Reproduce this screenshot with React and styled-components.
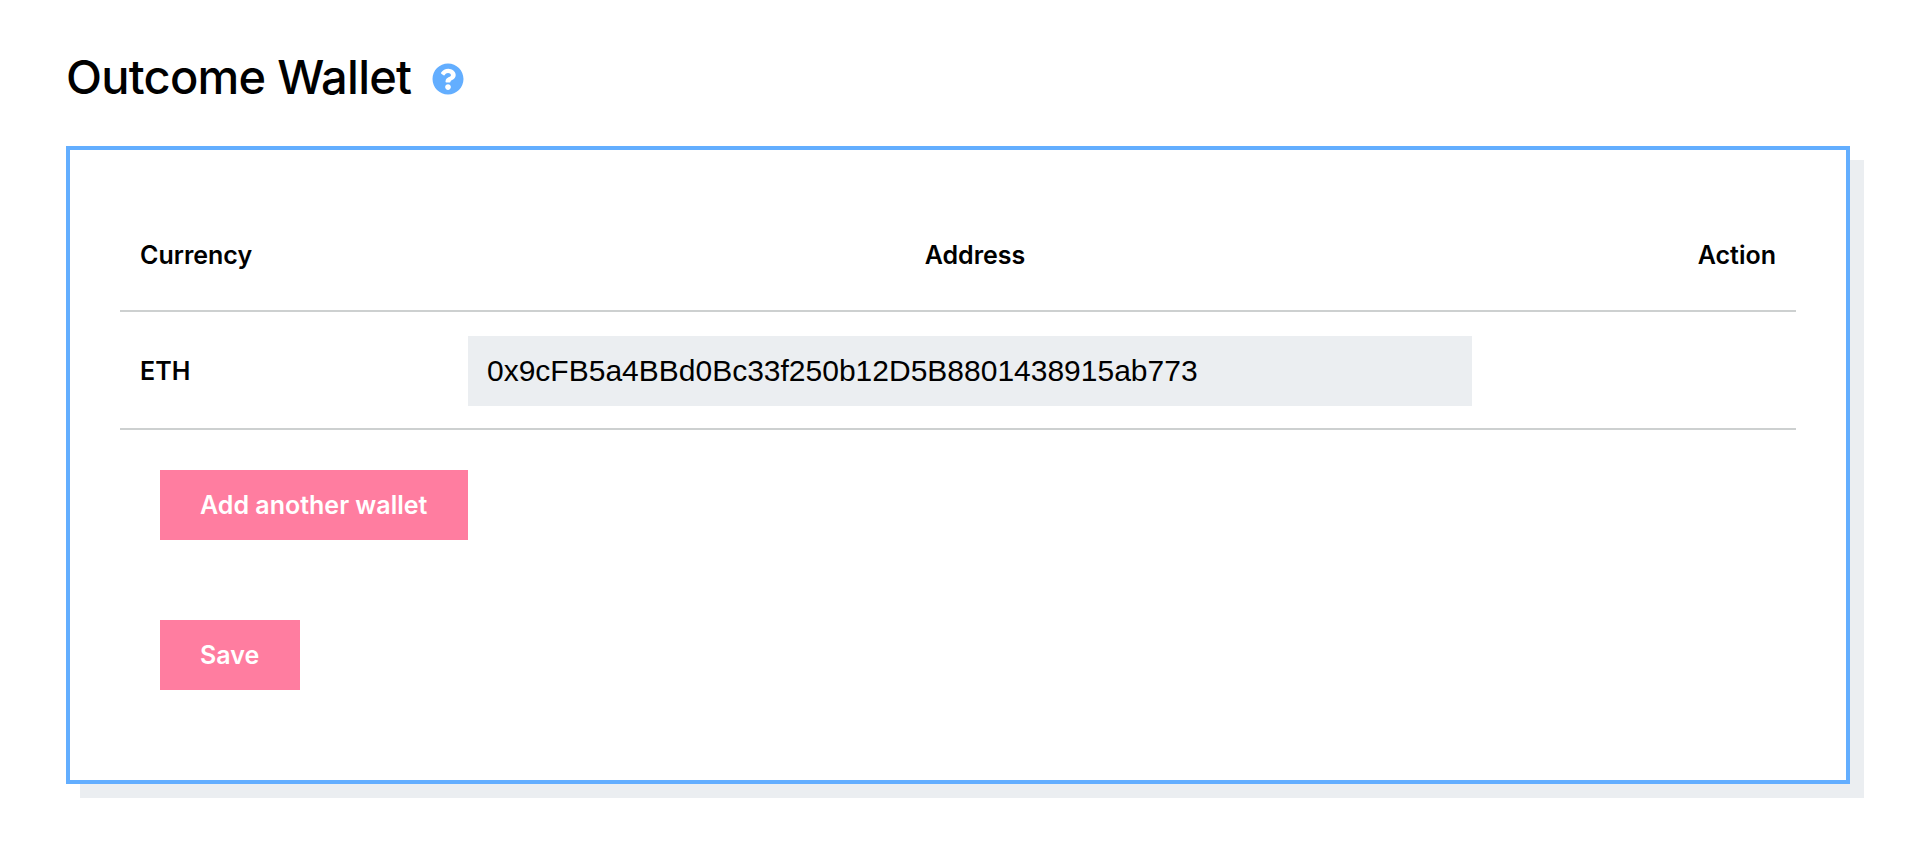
import React from 'react'
import styled, { createGlobalStyle } from 'styled-components'
import { FaQuestionCircle } from 'react-icons/fa'

const GlobalStyle = createGlobalStyle`
  html, body {
    margin: 0;
    padding: 0;
    background: #fff;
    font-family: Inter, "Liberation Sans", sans-serif;
    color: #000;
  }
`

const Page = styled.main`
  padding: 46px 58px 50px 66px;
`

const TitleRow = styled.div`
  display: flex;
  align-items: center;
  gap: 21px;
  height: 62px;
  margin-bottom: 38px;
`

const Title = styled.h1`
  margin: 0;
  font-size: 47px;
  line-height: 62px;
  font-weight: 500;
  letter-spacing: -0.75px;
`

const HelpIcon = styled(FaQuestionCircle)`
  width: 32px;
  height: 32px;
  color: #63aeff;
  margin-top: 3px;
`

const Card = styled.section`
  box-sizing: border-box;
  height: 638px;
  border: 4px solid #63aeff;
  box-shadow: 14px 14px 0 #ebeef1;
  padding: 50px 50px 0;
  background: #fff;
`

const Row = styled.div`
  box-sizing: border-box;
  display: grid;
  grid-template-columns: 348px 1004px 1fr;
  align-items: center;
  height: ${p => p.$height}px;
  padding-top: ${p => p.$top || 0}px;
  border-bottom: 2px solid #cdd0d0;
`

const HeadCell = styled.div`
  font-size: 25px;
  font-weight: 600;
  text-align: ${p => p.$align || 'left'};
  padding: 0 20px;
`

const AddressCell = styled(HeadCell)`
  padding-left: 30px;
`

const AddressBox = styled.div`
  box-sizing: border-box;
  height: 70px;
  padding: 0 19px;
  display: flex;
  align-items: center;
  background: #ebeef1;
  font-family: "Liberation Sans", Arial, sans-serif;
  font-size: 30px;
`

const Actions = styled.div`
  display: flex;
  flex-direction: column;
  align-items: flex-start;
  gap: 80px;
  padding: 40px 40px 0;
`

const PinkButton = styled.button`
  height: 70px;
  padding: 0 41px 0 40px;
  border: 0;
  background: #ff7da0;
  color: #fff;
  font-family: inherit;
  font-size: 25px;
  font-weight: 600;
`

export default function App() {
  return (
    <Page>
      <GlobalStyle />
      <TitleRow>
        <Title>Outcome Wallet</Title>
        <HelpIcon />
      </TitleRow>
      <Card>
        <Row $height={112}>
          <HeadCell>Currency</HeadCell>
          <AddressCell $align="center">Address</AddressCell>
          <HeadCell $align="right">Action</HeadCell>
        </Row>
        <Row $height={118} $top={2}>
          <HeadCell>ETH</HeadCell>
          <AddressBox>0x9cFB5a4BBd0Bc33f250b12D5B8801438915ab773</AddressBox>
        </Row>
        <Actions>
          <PinkButton>Add another wallet</PinkButton>
          <PinkButton>Save</PinkButton>
        </Actions>
      </Card>
    </Page>
  )
}
